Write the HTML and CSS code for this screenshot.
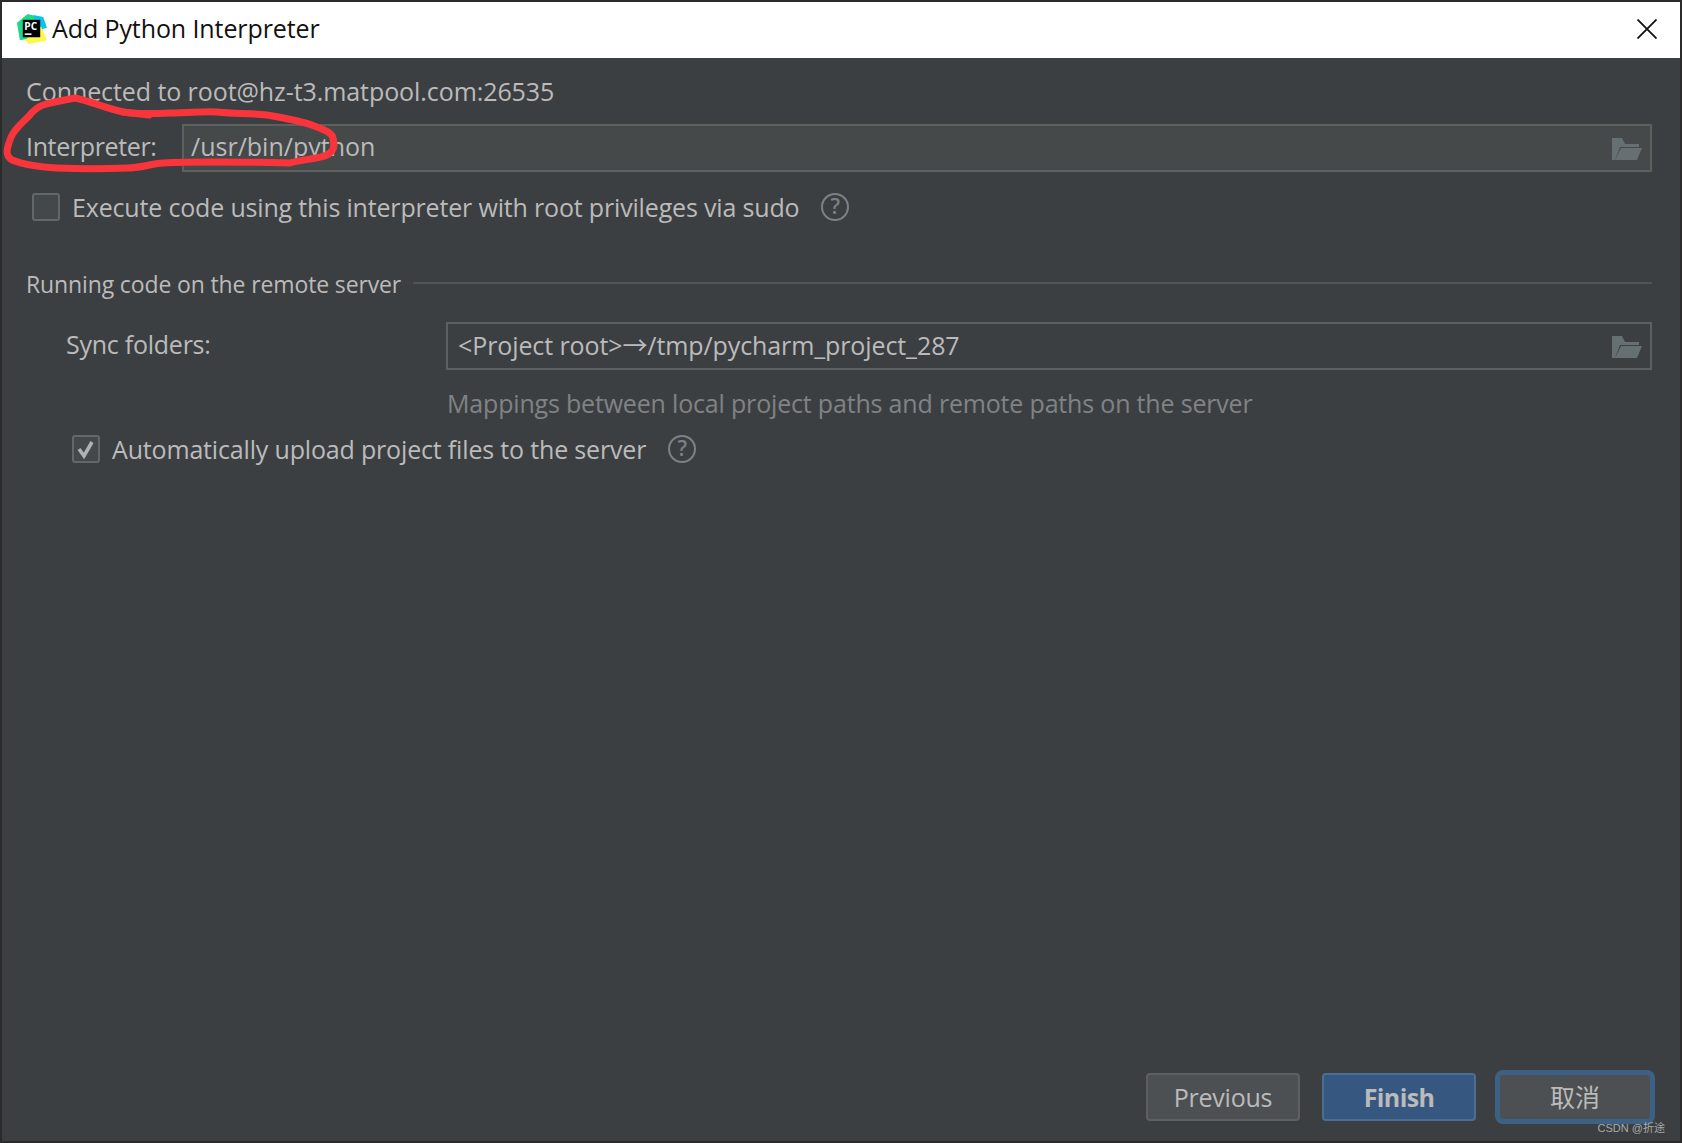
FILE: index.html
```html
<!DOCTYPE html>
<html lang="en">
<head>
    <meta charset="UTF-8">
    <title>Add Python Interpreter</title>
    <link rel="stylesheet" href="styles.css">
</head>
<body>
    <div class="window">
        <div class="titlebar">
            <svg class="app-icon" viewBox="0 0 32 32">
                <polygon points="1,9 12,0 24,3 22,24 4,27" fill="#21d789"/>
                <polygon points="18,1 28,3 32,14 24,17" fill="#07c3f2"/>
                <polygon points="9,27 26,13 32,27 14,31" fill="#fcf84a"/>
                <rect x="7" y="6" width="18" height="18" fill="#000"/>
                <rect x="9" y="20" width="7" height="1.6" fill="#fff"/>
                <text x="8.6" y="16" class="app-icon-text">PC</text>
            </svg>
            <div class="title">Add Python Interpreter</div>
            <svg class="close" viewBox="0 0 20 20">
                <path d="M0.5 0.5L19.5 19.5M19.5 0.5L0.5 19.5" stroke="#111" stroke-width="1.8" fill="none"/>
            </svg>
        </div>

        <div class="content">
            <div class="connected">Connected to root@hz-t3.matpool.com:26535</div>

            <div class="row interpreter-row">
                <div class="interpreter-label">Interpreter:</div>
                <div class="field">
                    <span>/usr/bin/python</span>
                    <svg class="folder" viewBox="0 0 30 22">
                        <path d="M0 0H10L13 6H27V9H8L3 22H0Z" fill="#667073"/>
                        <path d="M9 10H30L25 22H3Z" fill="#667073"/>
                    </svg>
                </div>
            </div>

            <div class="row check-row">
                <div class="checkbox"></div>
                <div class="check-label">Execute code using this interpreter with root privileges via sudo</div>
                <div class="help">?</div>
            </div>

            <div class="section">
                <div class="section-title">Running code on the remote server</div>
                <div class="section-line"></div>
            </div>

            <div class="row sync-row">
                <div class="sync-label">Sync folders:</div>
                <div class="field sync-field">
                    <span>&lt;Project root&gt;→/tmp/pycharm_project_287</span>
                    <svg class="folder" viewBox="0 0 30 22">
                        <path d="M0 0H10L13 6H27V9H8L3 22H0Z" fill="#667073"/>
                        <path d="M9 10H30L25 22H3Z" fill="#667073"/>
                    </svg>
                </div>
            </div>
            <div class="hint">Mappings between local project paths and remote paths on the server</div>

            <div class="row check-row upload-row">
                <div class="checkbox">
                    <svg viewBox="0 0 24 24">
                        <path d="M5 12L10 19L18 5" stroke="#afb1b3" stroke-width="3.6" fill="none"/>
                    </svg>
                </div>
                <div class="check-label">Automatically upload project files to the server</div>
                <div class="help">?</div>
            </div>

            <div class="buttons">
                <div class="btn btn-previous">Previous</div>
                <div class="btn btn-primary">Finish</div>
                <div class="btn btn-focus">取消</div>
            </div>
            <div class="watermark">CSDN @折途</div>
        </div>

        <!-- hand drawn red circle on top of the screenshot -->
        <svg class="scribble" viewBox="0 0 340 180">
            <path d="M75 98C90 101 105 108 123 112C135 114 150 114 170 113C190 113 205 111 217 112C235 114 250 113 267 115C285 118 305 122 317 127C325 130 332 133 333 138C334 143 335 147 332 151C328 156 322 157 316 158C305 160 296 161 290 163C250 162 200 161 163 163C150 164 140 168 127 168C105 169 80 169 57 168C40 167 22 164 12 160C7 157 6 153 8 146C10 139 11 136 14 132C19 125 25 120 29 116C33 111 37 107 43 105C53 102 64 100 75 98Z" fill="none" stroke="#f9353b" stroke-width="7" stroke-linejoin="round"/>
            <path d="M123 112L149 115" fill="none" stroke="#f9353b" stroke-width="7" stroke-linecap="round"/>
        </svg>
    </div>
</body>
</html>
```

FILE: styles.css
```css
html, body {
    margin: 0;
    padding: 0;
    height: 100%;
}
body {
    background-color: #2b2b2b;
    font-family: "Open Sans", "Noto Sans", "Noto Sans CJK SC", sans-serif;
    font-size: 25px;
    color: #bbbbbb;
    overflow: hidden;
}
.window {
    position: relative;
    height: 1139px;
    margin: 2px;
    display: flex;
    flex-direction: column;
}
.titlebar {
    height: 56px;
    flex-shrink: 0;
    display: flex;
    align-items: center;
    background-color: #fff;
    padding: 0 23px 0 14px;
}
.app-icon {
    width: 31px;
    height: 31px;
    margin-right: 5px;
    margin-bottom: 2px;
}
.app-icon-text {
    font-size: 10.5px;
    font-weight: 700;
    fill: #fff;
}
.title {
    flex: 1;
    color: #111;
    font-size: 25px;
    letter-spacing: -0.1px;
    padding-bottom: 4px;
}
.close {
    width: 20px;
    height: 20px;
    margin-bottom: 2px;
}
.content {
    flex: 1;
    position: relative;
    background-color: #3c3f41;
    padding: 0 28px 0 24px;
    display: flex;
    flex-direction: column;
}
.connected {
    margin-top: 13px;
    height: 40px;
    line-height: 40px;
    letter-spacing: -0.08px;
}
.row {
    display: flex;
    align-items: center;
}
.interpreter-row {
    margin-top: 13px;
}
.interpreter-label {
    width: 156px;
    letter-spacing: -0.35px;
    padding-bottom: 4px;
}
.field {
    flex: 1;
    height: 48px;
    box-sizing: border-box;
    display: flex;
    align-items: center;
    justify-content: space-between;
    padding: 0 8px 0 7px;
    background-color: #45494a;
    border: 2px solid #5e6060;
}
.field span {
    padding-bottom: 4px;
}
.folder {
    width: 30px;
    height: 22px;
    margin-top: 2px;
}
.check-row {
    margin-top: 18px;
    padding-left: 6px;
}
.check-label {
    letter-spacing: -0.17px;
}
.checkbox {
    width: 28px;
    height: 28px;
    box-sizing: border-box;
    border: 2px solid #646769;
    border-radius: 3px;
    background-color: #43494a;
    margin-right: 12px;
}
.checkbox svg {
    display: block;
    width: 24px;
    height: 24px;
}
.help {
    width: 28px;
    height: 28px;
    box-sizing: border-box;
    margin-left: 22px;
    border: 2px solid #7a8286;
    border-radius: 50%;
    color: #7a8286;
    font-size: 21px;
    font-weight: 600;
    line-height: 23px;
    text-align: center;
}
.section {
    display: flex;
    align-items: center;
    margin-top: 44px;
}
.section-title {
    font-size: 23px;
    letter-spacing: -0.13px;
    margin-right: 12px;
}
.section-line {
    flex: 1;
    height: 2px;
    margin-bottom: 2px;
    background-color: #515456;
}
.sync-row {
    margin-top: 22px;
    padding-left: 40px;
}
.sync-label {
    width: 380px;
    letter-spacing: -0.25px;
    padding-bottom: 4px;
}
.sync-field {
    padding-left: 10px;
    background-color: #3c3f41;
    letter-spacing: -0.1px;
}
.hint {
    margin-top: 16px;
    margin-left: 421px;
    color: #808386;
    letter-spacing: -0.18px;
}
.upload-row {
    margin-top: 12px;
    padding-left: 46px;
}
.buttons {
    margin-top: auto;
    margin-bottom: 20px;
    display: flex;
    justify-content: flex-end;
    align-items: center;
    gap: 22px;
}
.btn {
    width: 154px;
    height: 48px;
    box-sizing: border-box;
    border: 2px solid #5e6060;
    border-radius: 4px;
    background-color: #4c5052;
    text-align: center;
    line-height: 44px;
}
.btn-previous {
    letter-spacing: -0.25px;
}
.btn-primary {
    background-color: #365880;
    border-color: #4a6f94;
    font-weight: 700;
    letter-spacing: -0.6px;
}
.btn-focus {
    width: 152px;
    height: 46px;
    margin: 1px;
    border-width: 1px;
    border-color: #3d6185;
    box-shadow: 0 0 0 4px #3d6185;
}
.watermark {
    position: absolute;
    right: 15px;
    bottom: 6px;
    font-family: "Liberation Sans", "Noto Sans CJK SC", sans-serif;
    font-size: 11px;
    color: #a8abad;
}
.scribble {
    position: absolute;
    top: -2px;
    left: -2px;
    width: 340px;
    height: 180px;
    pointer-events: none;
}
```
